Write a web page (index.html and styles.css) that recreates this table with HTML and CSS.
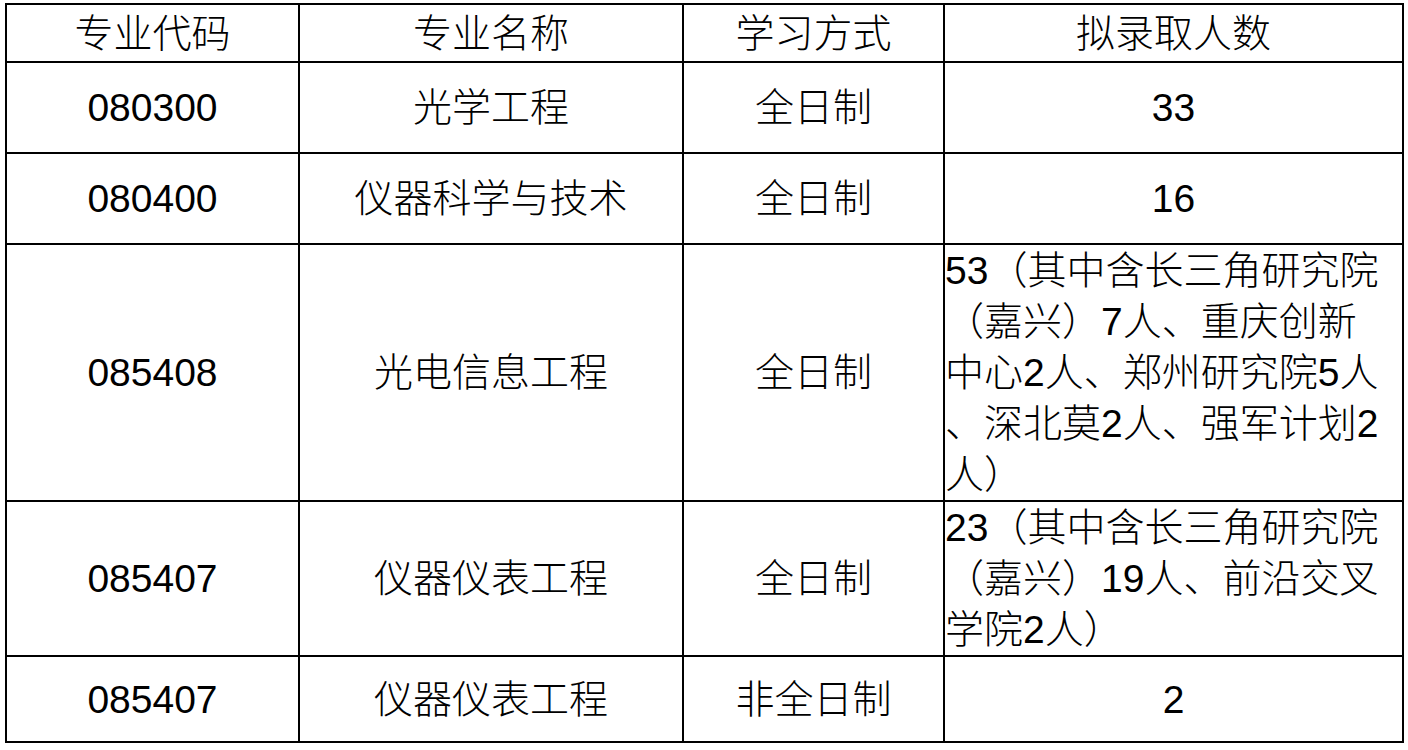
FILE: index.html
```html
<!DOCTYPE html>
<html lang="zh-CN">
<head>
<meta charset="utf-8">
<title>拟录取人数</title>
<link rel="stylesheet" href="styles.css">
</head>
<body>
<table class="quota">
  <colgroup>
    <col class="c1">
    <col class="c2">
    <col class="c3">
    <col class="c4">
  </colgroup>
  <tr class="r-head">
    <td>专业代码</td>
    <td>专业名称</td>
    <td>学习方式</td>
    <td>拟录取人数</td>
  </tr>
  <tr class="r-std">
    <td>080300</td>
    <td>光学工程</td>
    <td>全日制</td>
    <td>33</td>
  </tr>
  <tr class="r-std">
    <td>080400</td>
    <td>仪器科学与技术</td>
    <td>全日制</td>
    <td>16</td>
  </tr>
  <tr class="r-five">
    <td>085408</td>
    <td>光电信息工程</td>
    <td>全日制</td>
    <td class="note">53（其中含长三角研究院<br>（嘉兴）7人、重庆创新<br>中心2人、郑州研究院5人<br>、深北莫2人、强军计划2<br>人）</td>
  </tr>
  <tr class="r-three">
    <td>085407</td>
    <td>仪器仪表工程</td>
    <td>全日制</td>
    <td class="note">23（其中含长三角研究院<br>（嘉兴）19人、前沿交叉<br>学院2人）</td>
  </tr>
  <tr class="r-last">
    <td>085407</td>
    <td>仪器仪表工程</td>
    <td>非全日制</td>
    <td>2</td>
  </tr>
</table>
</body>
</html>
```

FILE: styles.css
```css
html, body {
  margin: 0;
  padding: 0;
  background: #ffffff;
}

body {
  font-family: "Liberation Sans", "Noto Sans CJK SC", sans-serif;
  color: #000000;
}

.quota {
  margin: 3px 0 0 5px;
  border-collapse: collapse;
  table-layout: fixed;
  width: 1397px;
  font-size: 39px;
  font-weight: 300;
}

.c1 { width: 293px; }
.c2 { width: 384px; }
.c3 { width: 261px; }
.c4 { width: 459px; }

.quota td {
  border: 2px solid #000000;
  padding: 0 2px;
  text-align: center;
  vertical-align: middle;
  line-height: 51px;
  white-space: nowrap;
}

.quota td.note {
  text-align: left;
  padding-left: 0;
}

.r-head { height: 58px; }
.r-std { height: 91px; }
.r-five { height: 257px; }
.r-three { height: 154px; }
.r-last { height: 86px; }
```
